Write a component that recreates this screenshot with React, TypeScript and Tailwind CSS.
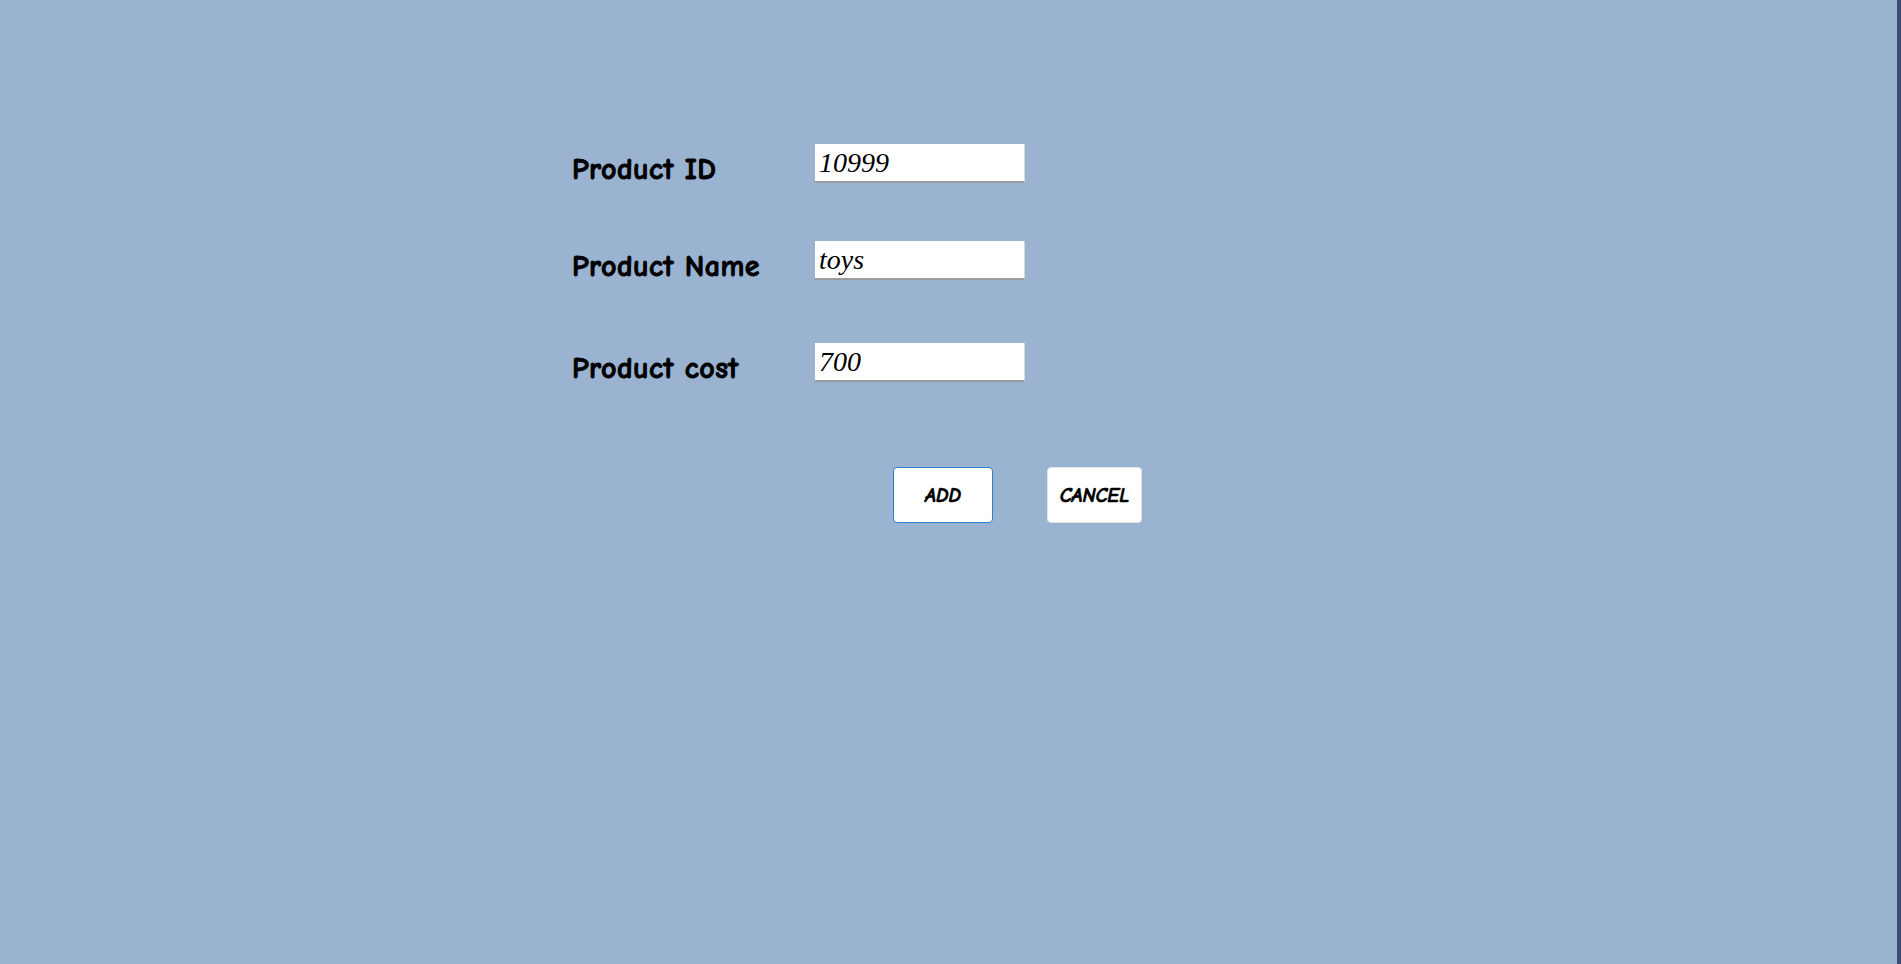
const fields = [
  { label: "Product ID", value: "10999", mt: "mt-[144px]" },
  { label: "Product Name", value: "toys", mt: "mt-[58px]" },
  { label: "Product cost", value: "700", mt: "mt-[63px]" },
];

const comic = { fontFamily: '"Comic Sans MS", "Comic Neue", Lato, sans-serif' };

export default function App() {
  return (
    <div className="flex min-h-screen w-full bg-[#99b3d1]">
      <div className="flex-1">
        <form className="ml-[572px] flex flex-col" onSubmit={(e) => e.preventDefault()}>
          {fields.map((f) => (
            <div key={f.label} className={`${f.mt} flex h-[39px] items-start`}>
              <label
                className="w-[243px] pt-[11px] text-[30px] font-bold leading-none tracking-[0.4px] text-black [-webkit-text-stroke:0.9px_black]"
                style={comic}
              >
                {f.label}
              </label>
              <input
                defaultValue={f.value}
                className="h-[39px] w-[210px] border-b-2 border-r border-b-[#9a9a9a] border-r-[#d8d8d8] bg-white px-[4px] pt-[1px] text-[28px] italic text-black outline-none"
                style={{ fontFamily: '"Liberation Serif", "Times New Roman", serif' }}
              />
            </div>
          ))}
          <div className="ml-[321px] mt-[85px] flex gap-[54px]">
            <button
              type="submit"
              className="h-[56px] w-[100px] rounded-[4px] border border-[#2b7fd6] bg-white pt-[2px] text-[20px] font-bold italic text-black [-webkit-text-stroke:0.6px_black]"
              style={comic}
            >
              ADD
            </button>
            <button
              type="button"
              className="h-[56px] w-[95px] rounded-[4px] border border-[#e4e4e4] bg-white pt-[2px] text-[20px] font-bold italic text-black [-webkit-text-stroke:0.6px_black]"
              style={comic}
            >
              CANCEL
            </button>
          </div>
        </form>
      </div>
      <div className="w-[4px] shrink-0 bg-[#3d4a72]" />
    </div>
  );
}
